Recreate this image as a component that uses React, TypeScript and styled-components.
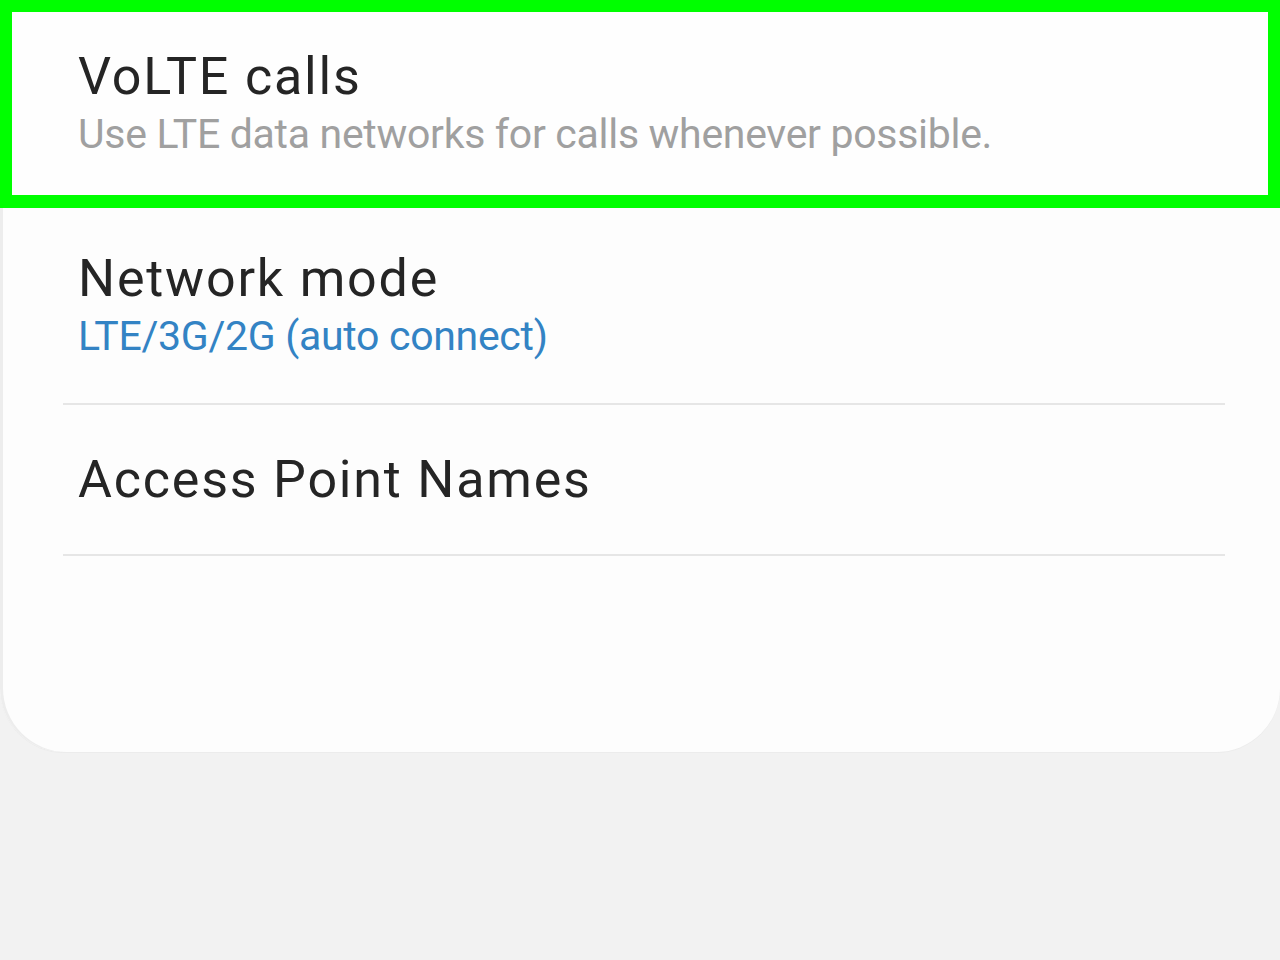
import React from 'react';
import styled, { createGlobalStyle } from 'styled-components';

const GlobalStyle = createGlobalStyle`
  html, body {
    margin: 0;
    padding: 0;
    background: #f2f2f2;
  }
  body {
    font-family: Roboto, 'Noto Sans', 'Liberation Sans', sans-serif;
    -webkit-font-smoothing: antialiased;
  }
`;

interface Setting {
  title: string;
  summary?: string;
  accent?: boolean;
}

const settings: Setting[] = [
  { title: 'VoLTE calls', summary: 'Use LTE data networks for calls whenever possible.' },
  { title: 'Network mode', summary: 'LTE/3G/2G (auto connect)', accent: true },
  { title: 'Access Point Names' },
];

export default function App() {
  const [first, ...rest] = settings;
  return (
    <>
      <GlobalStyle />
      <Screen>
        <Card>
          <Highlight>
            <Title>{first.title}</Title>
            <Summary>{first.summary}</Summary>
          </Highlight>
          {rest.map((s, i) => (
            <React.Fragment key={s.title}>
              <Row $first={i === 0}>
                <Title>{s.title}</Title>
                {s.summary && <Summary $accent={s.accent}>{s.summary}</Summary>}
              </Row>
              <Divider />
            </React.Fragment>
          ))}
        </Card>
      </Screen>
    </>
  );
}

const Screen = styled.div`
  width: 1280px;
  height: 960px;
  overflow: hidden;
  background: #f2f2f2;
`;

const Card = styled.div`
  height: 752px;
  background: #fdfdfd;
  border-bottom-left-radius: 64px;
  border-bottom-right-radius: 64px;
  box-shadow: inset 3px 0 0 #ededed, 0 1px 0 #ececec;
  display: flex;
  flex-direction: column;
`;

const Highlight = styled.div`
  box-sizing: border-box;
  height: 208px;
  border: 12px solid #00ff00;
  border-bottom-width: 13px;
  padding: 35px 0 0 66px;
  background: #fefefe;
`;

const Row = styled.div<{ $first?: boolean }>`
  padding: ${(p) => (p.$first ? '41px 0 43px 78px' : '45px 0 44px 78px')};
`;

const Title = styled.div`
  font-size: 52px;
  line-height: 60px;
  color: #252525;
  letter-spacing: 1.8px;
`;

const Summary = styled.div<{ $accent?: boolean }>`
  margin-top: 3px;
  font-size: 41px;
  line-height: 48px;
  letter-spacing: -0.3px;
  color: ${(p) => (p.$accent ? '#3383c4' : '#a0a0a0')};
`;

const Divider = styled.div`
  height: 2px;
  margin: 0 55px 0 63px;
  background: #e6e6e6;
`;
